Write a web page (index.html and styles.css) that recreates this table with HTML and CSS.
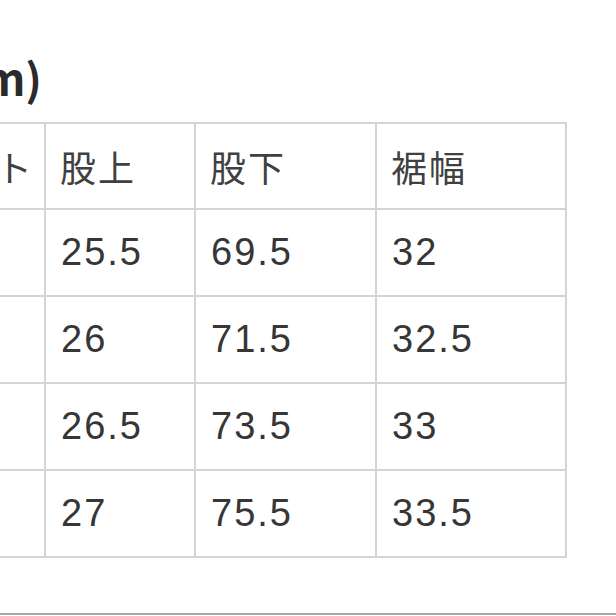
FILE: index.html
```html
<!DOCTYPE html>
<html lang="ja">
<head>
<meta charset="utf-8">
<title>サイズ表</title>
<link rel="stylesheet" href="styles.css">
</head>
<body>
<div class="page">
  <div class="sheet">
    <h2 class="title">サイズ(cm)</h2>
    <table class="chart">
      <thead>
        <tr>
          <th class="c-size">サイズ</th>
          <th class="c-waist">ウエスト</th>
          <th class="c-rise">股上</th>
          <th class="c-inseam">股下</th>
          <th class="c-hem">裾幅</th>
        </tr>
      </thead>
      <tbody>
        <tr><td>S</td><td>70</td><td>25.5</td><td>69.5</td><td>32</td></tr>
        <tr><td>M</td><td>74</td><td>26</td><td>71.5</td><td>32.5</td></tr>
        <tr><td>L</td><td>78</td><td>26.5</td><td>73.5</td><td>33</td></tr>
        <tr><td>XL</td><td>82</td><td>27</td><td>75.5</td><td>33.5</td></tr>
      </tbody>
    </table>
  </div>
  <div class="rule"></div>
</div>
</body>
</html>
```
FILE: styles.css
```css
html, body {
  margin: 0;
  padding: 0;
  background: #ffffff;
}
body {
  width: 616px;
  height: 616px;
  overflow: hidden;
}
.page {
  width: 616px;
  height: 616px;
  overflow: hidden;
  display: flex;
  flex-direction: column;
}
.sheet {
  flex: 1;
  margin-left: -283px;
}
.title {
  margin: 0;
  padding-top: 55px;
  height: 44px;
  font-family: "Noto Sans CJK JP", "Noto Sans", sans-serif;
  font-weight: 700;
  font-size: 44px;
  line-height: 44px;
  color: #2a2a2a;
  text-align: right;
  width: 325px;
}
.chart {
  margin-top: 23px;
  border-collapse: collapse;
  table-layout: fixed;
  font-family: "Liberation Sans", "Noto Sans CJK JP", sans-serif;
  color: #363636;
}
.chart th,
.chart td {
  border: 2px solid #d4d4d4;
  height: 84px;
  padding: 0 0 0 15px;
  text-align: left;
  vertical-align: middle;
  font-size: 38px;
  letter-spacing: 2px;
  font-weight: 400;
  white-space: nowrap;
  overflow: hidden;
}
.chart tbody td {
  height: 85px;
}
.chart th {
  padding-left: 14px;
  font-family: "Noto Sans CJK JP", sans-serif;
  font-size: 36px;
  letter-spacing: 2px;
  color: #404040;
}
.c-size { width: 133px; }
.c-waist { width: 162px; }
.c-rise { width: 134px; }
.c-inseam { width: 165px; }
.c-hem { width: 174px; }
.rule {
  height: 2px;
  margin-bottom: 1px;
  background: #a8a8a8;
}
```
